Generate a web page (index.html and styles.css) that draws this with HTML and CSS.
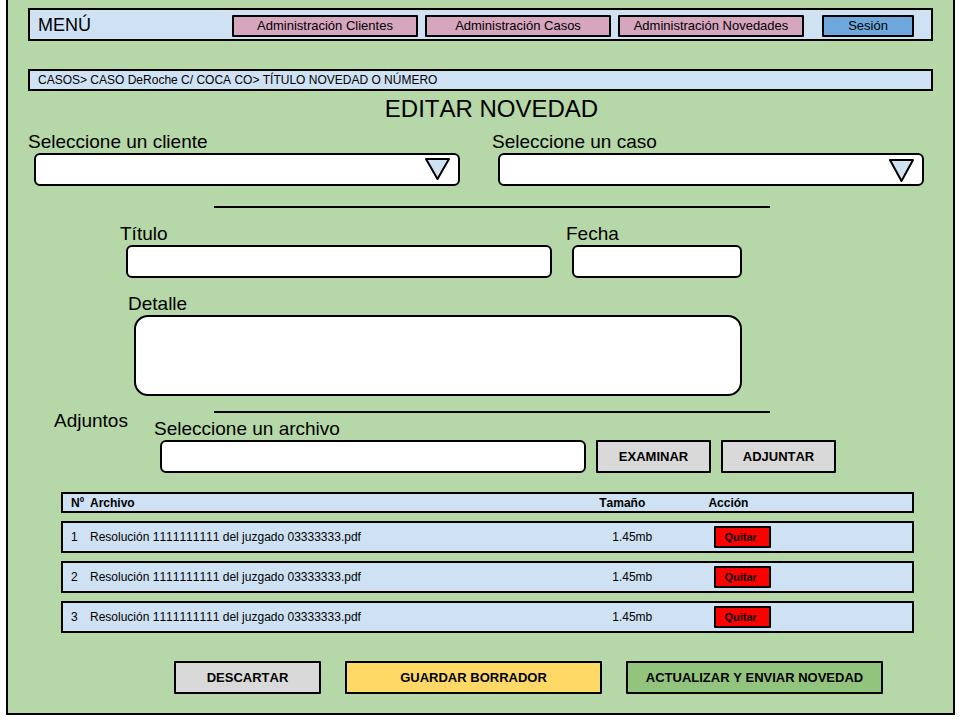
FILE: index.html
```html
<!DOCTYPE html>
<html lang="es">
<head>
<meta charset="utf-8">
<title>Editar novedad</title>
<link rel="stylesheet" href="styles.css">
</head>
<body>
<div class="panel">
  <header class="topbar">
    <span class="brand">MENÚ</span>
    <nav class="nav">
      <button type="button" class="nav-button">Administración Clientes</button>
      <button type="button" class="nav-button">Administración Casos</button>
      <button type="button" class="nav-button">Administración Novedades</button>
    </nav>
    <button type="button" class="nav-button session">Sesión</button>
  </header>

  <div class="breadcrumb">CASOS&gt; CASO DeRoche C/ COCA CO&gt; TÍTULO NOVEDAD O NÚMERO</div>

  <main>
    <h1 class="title">EDITAR NOVEDAD</h1>

    <section class="pickers">
      <div class="field">
        <label for="cliente">Seleccione un cliente</label>
        <div class="select">
          <select id="cliente" class="control"><option></option></select>
          <svg class="arrow" viewBox="0 0 26 24" aria-hidden="true"><path d="M1 1H24L12.500 21Z"/></svg>
        </div>
      </div>
      <div class="field">
        <label for="caso">Seleccione un caso</label>
        <div class="select">
          <select id="caso" class="control"><option></option></select>
          <svg class="arrow" viewBox="0 0 26 24" aria-hidden="true"><path d="M1 2H24L12.500 23Z"/></svg>
        </div>
      </div>
    </section>

    <hr class="divider">

    <section class="details">
      <div class="field">
        <label for="titulo">Título</label>
        <input id="titulo" class="control" type="text">
      </div>
      <div class="field">
        <label for="fecha">Fecha</label>
        <input id="fecha" class="control" type="text">
      </div>
      <div class="field detail">
        <label for="detalle">Detalle</label>
        <textarea id="detalle" class="control area"></textarea>
      </div>
    </section>

    <hr class="divider">

    <section class="attach">
      <h2 class="attach-title">Adjuntos</h2>
      <div class="field attach-field">
        <label for="archivo">Seleccione un archivo</label>
        <input id="archivo" class="control" type="text">
      </div>
      <button type="button" class="button attach-button">EXAMINAR</button>
      <button type="button" class="button attach-button">ADJUNTAR</button>
    </section>

    <div class="files-wrap">
      <table class="files">
        <colgroup><col class="col-number"><col class="col-file"><col class="col-size"><col></colgroup>
        <thead>
          <tr><th>Nº</th><th>Archivo</th><th>Tamaño</th><th>Acción</th></tr>
        </thead>
        <tbody>
          <tr><td>1</td><td>Resolución 1111111111 del juzgado 03333333.pdf</td><td class="size">1.45mb</td><td class="action"><button type="button" class="remove">Quitar</button></td></tr>
          <tr><td>2</td><td>Resolución 1111111111 del juzgado 03333333.pdf</td><td class="size">1.45mb</td><td class="action"><button type="button" class="remove">Quitar</button></td></tr>
          <tr><td>3</td><td>Resolución 1111111111 del juzgado 03333333.pdf</td><td class="size">1.45mb</td><td class="action"><button type="button" class="remove">Quitar</button></td></tr>
        </tbody>
      </table>
    </div>

    <div class="actions">
      <button type="button" class="button">DESCARTAR</button>
      <button type="button" class="button draft">GUARDAR BORRADOR</button>
      <button type="button" class="button send">ACTUALIZAR Y ENVIAR NOVEDAD</button>
    </div>
  </main>
</div>
</body>
</html>
```
FILE: styles.css
```css
* {
  box-sizing: border-box;
}

body {
  margin: 0;
  background: #fff;
  color: #000;
  font-family: "Liberation Sans", Arial, sans-serif;
  font-size: 12px;
  font-kerning: none;
}

button,
input,
select,
textarea {
  margin: 0;
  font: inherit;
  font-kerning: none;
  color: inherit;
}

.panel {
  margin: 0 5px 0 6px;
  padding: 8px 0 19px;
  border: 2px solid #000;
  border-top: 0;
  background: #b6d7a8;
}

.topbar {
  display: flex;
  align-items: center;
  height: 33px;
  margin: 0 20px;
  padding: 2px 17px 0 8px;
  border: 2px solid #000;
  background: #cfe2f3;
}

.brand {
  font-size: 18px;
}

.nav {
  display: flex;
  gap: 7px;
  margin-left: auto;
}

.nav-button {
  width: 186px;
  height: 22px;
  padding: 0;
  border: 2px solid #000;
  border-radius: 1px;
  background: #d5a6bd;
  font-size: 13px;
  line-height: 18px;
}

.session {
  width: 92px;
  margin-left: 18px;
  background: #6fa8dc;
}

.breadcrumb {
  height: 22px;
  margin: 28px 20px 0;
  padding: 0 8px;
  border: 2px solid #000;
  background: #cfe2f3;
  line-height: 18px;
}

.title {
  margin: 4px 0 8px;
  padding-left: 22px;
  font-size: 24px;
  font-weight: 400;
  line-height: 28px;
  text-align: center;
}

.pickers {
  display: grid;
  grid-template-columns: 1fr 1fr;
  gap: 32px;
  padding: 0 29px 0 20px;
}

.field {
  display: flex;
  flex-direction: column;
  min-width: 0;
}

.field label,
.attach-title {
  font-size: 19px;
  font-weight: 400;
  line-height: 22px;
}

.control {
  display: block;
  height: 33px;
  margin-left: 6px;
  padding: 0 8px;
  border: 2px solid #000;
  border-radius: 6px;
  background: #fff;
}

.select {
  position: relative;
  display: grid;
}

.select .control {
  appearance: none;
}

.arrow {
  position: absolute;
  top: 5px;
  right: 9px;
  width: 26px;
  height: 24px;
  fill: #cfe2f3;
  stroke: #000;
  stroke-width: 2px;
  stroke-linejoin: round;
  pointer-events: none;
}

.divider {
  height: 2px;
  margin: 20px 183px 0 206px;
  border: 0;
  background: #000;
}

.details {
  display: grid;
  grid-template-columns: 432fr 176fr;
  gap: 15px 14px;
  padding: 15px 211px 0 112px;
}

.detail {
  grid-column: 1 / -1;
  padding-left: 8px;
}

.area {
  height: 81px;
  padding: 8px 14px;
  border-radius: 14px;
  resize: none;
}

.details + .divider {
  margin-top: 15px;
}

.attach {
  display: flex;
  align-items: flex-end;
  gap: 10px;
  padding: 0 117px 0 46px;
}

.attach-title {
  align-self: flex-start;
  width: 90px;
  margin: 0;
  line-height: 16px;
}

.attach-field {
  flex: 1;
  padding-top: 5px;
}

.button {
  height: 33px;
  padding: 0;
  border: 2px solid #000;
  border-radius: 1px;
  background: #d9d9d9;
  font-size: 13px;
  font-weight: 700;
}

.attach-button {
  width: 115px;
}

.files-wrap {
  padding: 11px 39px 0 53px;
}

.files {
  width: 100%;
  border-collapse: separate;
  border-spacing: 0 8px;
  table-layout: fixed;
}

.col-number {
  width: 3.4%;
}

.col-file {
  width: 59.7%;
}

.col-size {
  width: 12.8%;
}

.files th,
.files td {
  height: 32px;
  padding: 0;
  border: solid #000;
  border-width: 2px 0;
  background: #cfe2f3;
  text-align: left;
  vertical-align: middle;
}

.files th {
  height: 21px;
}

.files th:first-child,
.files td:first-child {
  padding-left: 8px;
  border-left-width: 2px;
}

.files th:last-child,
.files td:last-child {
  border-right-width: 2px;
}

.files .size {
  padding-left: 13px;
}

.files .action {
  padding-left: 6px;
}

.remove {
  display: block;
  width: 57px;
  height: 22px;
  padding: 0 8px;
  border: 2px solid #000;
  border-radius: 1px;
  background: #f00;
  font-size: 11px;
  font-weight: 700;
  line-height: 18px;
  text-align: left;
}

.actions {
  display: grid;
  grid-template-columns: 147fr 257fr 257fr;
  gap: 24px;
  padding: 20px 70px 0 166px;
}

.draft {
  background: #ffd966;
}

.send {
  background: #93c47d;
}
```
